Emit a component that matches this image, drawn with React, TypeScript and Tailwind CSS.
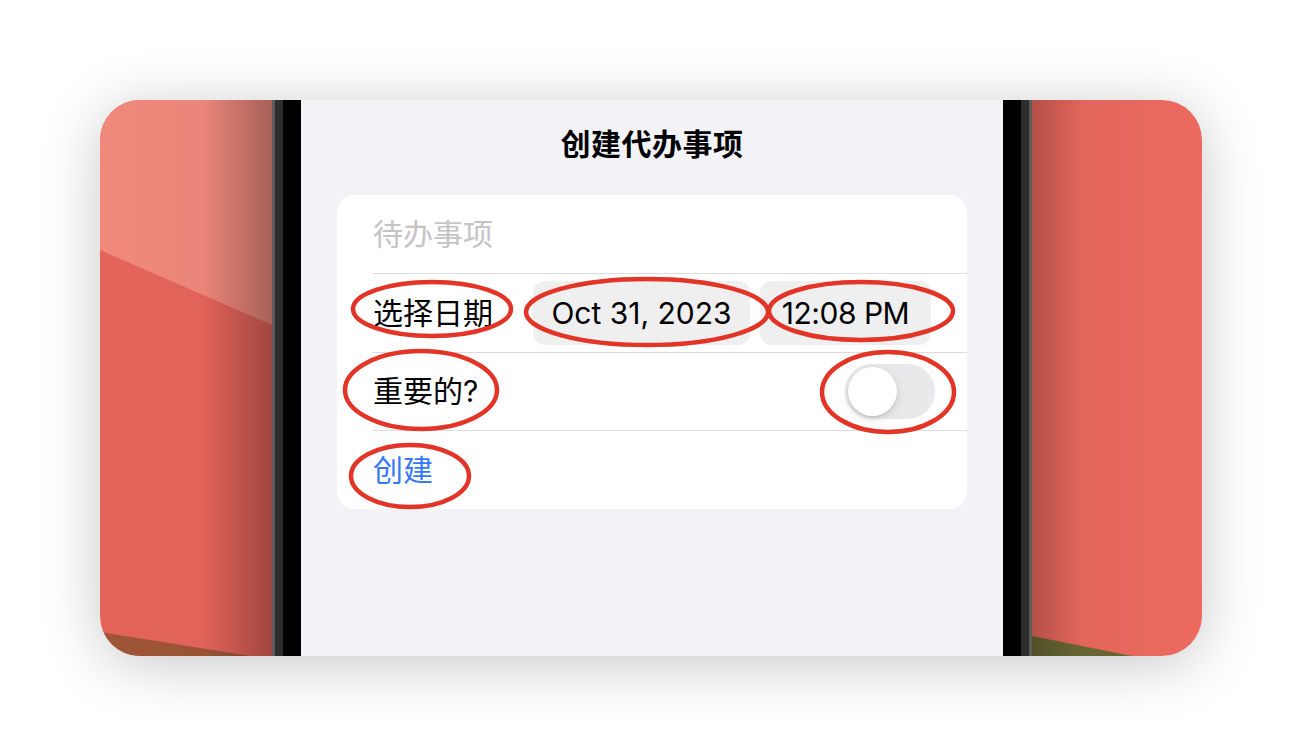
const cjk = "font-['Inter','Noto_Sans_CJK_SC',sans-serif]";

function LeftWall() {
    return (
        <svg className="block w-full h-full" viewBox="0 0 172 556" preserveAspectRatio="none">
            <defs>
                <linearGradient id="lshade" x1="0" y1="0" x2="1" y2="0">
                    <stop offset="0" stopColor="#000" stopOpacity="0" />
                    <stop offset="0.6" stopColor="#000" stopOpacity="0.02" />
                    <stop offset="1" stopColor="#000" stopOpacity="0.3" />
                </linearGradient>
            </defs>
            <rect width="172" height="556" fill="#e5645a" />
            <polygon points="0,0 172,0 172,225 0,150" fill="#ef897c" />
            <polygon points="0,532 0,556 150,556" fill="#9d5536" />
            <rect width="172" height="556" fill="url(#lshade)" />
        </svg>
    );
}

function RightWall() {
    return (
        <svg className="block w-full h-full" viewBox="0 0 170 556" preserveAspectRatio="none">
            <defs>
                <linearGradient id="rshade" x1="0" y1="0" x2="1" y2="0">
                    <stop offset="0" stopColor="#000" stopOpacity="0.24" />
                    <stop offset="0.3" stopColor="#000" stopOpacity="0.04" />
                    <stop offset="1" stopColor="#000" stopOpacity="0" />
                </linearGradient>
            </defs>
            <rect width="170" height="556" fill="#ec6a5f" />
            <polygon points="0,536 0,556 100,556" fill="#6b6a34" />
            <rect width="170" height="556" fill="url(#rshade)" />
        </svg>
    );
}

function Toggle() {
    return (
        <div className="w-[90px] h-[55px] rounded-full bg-[#e9e9eb] p-[3px] flex items-center">
            <div className="w-[49px] h-[49px] rounded-full bg-white shadow-[0_3px_8px_rgba(0,0,0,0.15),0_1px_1px_rgba(0,0,0,0.08)]" />
        </div>
    );
}

function Marks() {
    // red hand-drawn annotation rings over the form
    const rings = [
        { cx: 131, cy: 209, rx: 79, ry: 27 },
        { cx: 346, cy: 212, rx: 121, ry: 33 },
        { cx: 560, cy: 211, rx: 92, ry: 29 },
        { cx: 120, cy: 290, rx: 76, ry: 39 },
        { cx: 587, cy: 292, rx: 66, ry: 40 },
        { cx: 109, cy: 376, rx: 59, ry: 31 },
    ];
    return (
        <svg className="absolute inset-0 w-full h-full pointer-events-none" viewBox="0 0 702 556">
            {rings.map((r, i) => (
                <ellipse key={i} cx={r.cx} cy={r.cy} rx={r.rx} ry={r.ry} fill="none" stroke="#e23427" strokeWidth="4.5" />
            ))}
        </svg>
    );
}

export default function App() {
    return (
        <div className={`w-[1302px] h-[756px] bg-white pt-[100px] pl-[100px] ${cjk}`}>
            <div className="w-[1102px] h-[556px] rounded-[40px] overflow-hidden flex shadow-[0_8px_60px_rgba(0,0,0,0.22)]">
                <div className="w-[172px] h-full">
                    <LeftWall />
                </div>
                <div className="w-[3px] bg-[#5a5a5a]" />
                <div className="w-[8px] bg-[#2c2c2c]" />
                <div className="w-[18px] bg-black" />

                <div className="relative w-[702px] h-full bg-[#f2f2f7] flex flex-col">
                    <div className="h-[95px] flex items-center justify-center pb-[6px]">
                        <h1 className="text-[30px] font-bold text-black tracking-[0.5px]">创建代办事项</h1>
                    </div>

                    <div className="mx-[36px] bg-white rounded-[18px] overflow-hidden">
                        <div className="h-[78px] flex items-center pl-[36px] text-[30px] text-[#c4c4c7]">待办事项</div>
                        <div className="ml-[35px] h-px bg-[#dcdcde]" />
                        <div className="h-[78px] flex items-center pl-[36px] pr-[36px]">
                            <span className="text-[30px] text-black flex-1">选择日期</span>
                            <div className="w-[217px] h-[64px] rounded-[12px] bg-[#efeff0] flex items-center justify-center text-[30px] text-black">Oct 31, 2023</div>
                            <div className="ml-[10px] w-[171px] h-[64px] rounded-[12px] bg-[#efeff0] flex items-center justify-center text-[30px] text-black tracking-[-0.5px]">12:08 PM</div>
                        </div>
                        <div className="ml-[35px] h-px bg-[#dcdcde]" />
                        <div className="h-[77px] flex items-center pl-[36px] pr-[32px]">
                            <span className="text-[30px] text-black flex-1">重要的?</span>
                            <Toggle />
                        </div>
                        <div className="ml-[35px] h-px bg-[#dcdcde]" />
                        <div className="h-[78px] flex items-center pl-[36px] text-[30px] text-[#3478f6]">创建</div>
                    </div>

                    <Marks />
                </div>

                <div className="w-[18px] bg-black" />
                <div className="w-[8px] bg-[#2c2c2c]" />
                <div className="w-[3px] bg-[#5a5a5a]" />
                <div className="w-[170px] h-full">
                    <RightWall />
                </div>
            </div>
        </div>
    );
}
